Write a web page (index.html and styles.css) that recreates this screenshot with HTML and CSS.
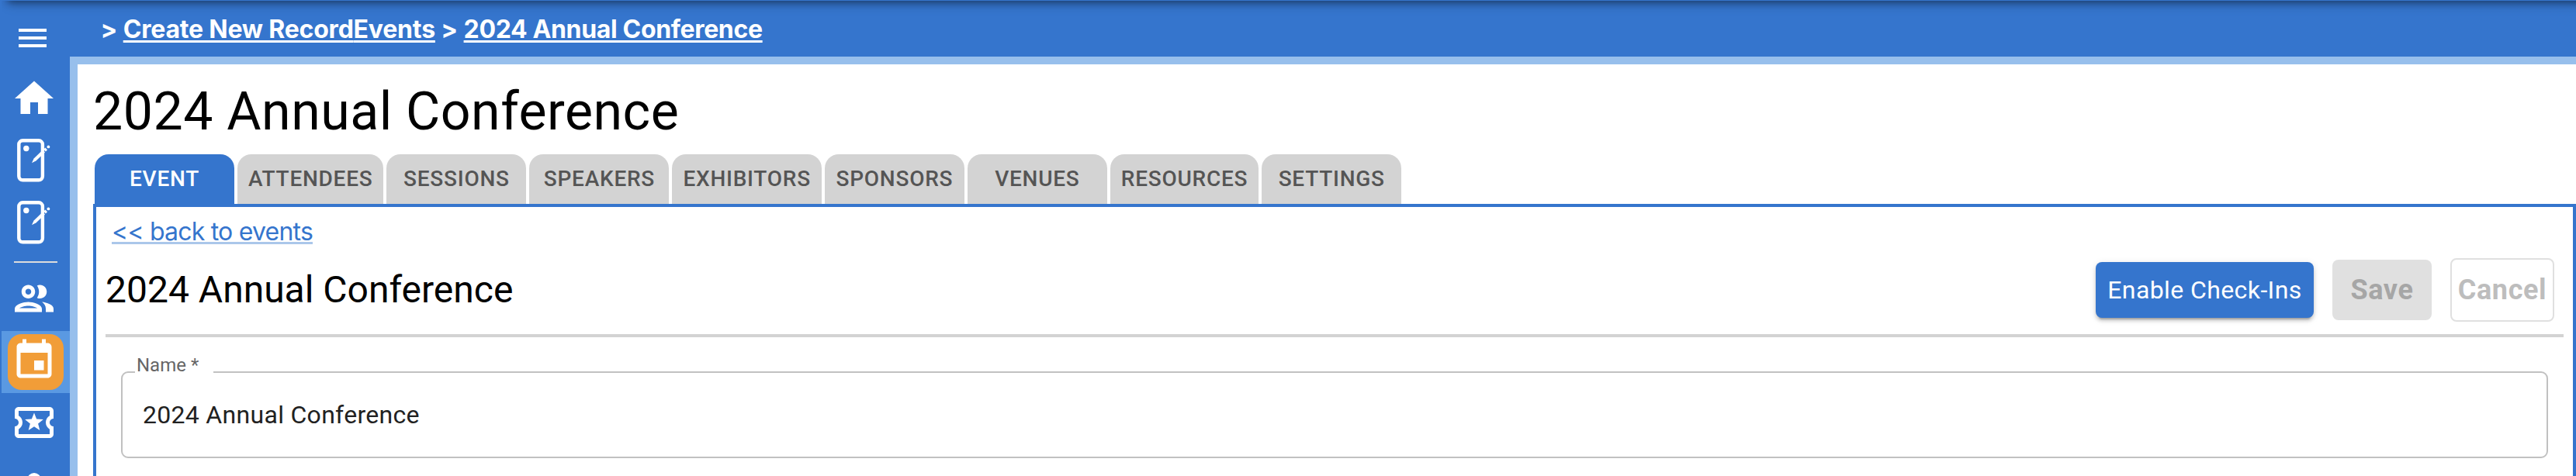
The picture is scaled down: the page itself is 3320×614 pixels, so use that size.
FILE: index.html
```
<!DOCTYPE html>
<html lang="en">
<head>
    <meta charset="UTF-8">
    <meta name="viewport" content="width=device-width, initial-scale=1.0">
    <title>2024 Annual Conference</title>
    <link rel="stylesheet" href="styles.css">
</head>
<body>
    <div class="app">
        <div class="top-shadow"></div>
        <nav class="sidebar">
            <button class="menu-button">
                <svg viewBox="0 0 24 24"><path d="M3 18h18v-2H3v2zm0-5h18v-2H3v2zm0-7v2h18V6H3z"/></svg>
            </button>
            <a class="nav-item">
                <svg viewBox="0 0 24 24"><path d="M10 20v-6h4v6h5v-8h3L12 3 2 12h3v8z"/></svg>
            </a>
            <a class="nav-item">
                <svg viewBox="0 0 60 60">
                    <rect class="outline" x="10.3" y="4.3" width="30.6" height="51" rx="5"/>
                    <circle cx="19.8" cy="14.5" r="3.7"/>
                    <path d="M27 33.2l2.6-5.6L41 16.6l3 3L32.6 30.2z"/>
                    <path d="M42.2 15.6l2.2-2.1 2.6 2.7-2.1 2.2z"/>
                    <circle cx="48.4" cy="12.4" r="1.9"/>
                </svg>
            </a>
            <a class="nav-item">
                <svg viewBox="0 0 60 60">
                    <rect class="outline" x="10.3" y="4.3" width="30.6" height="51" rx="5"/>
                    <circle cx="19.8" cy="14.5" r="3.7"/>
                    <path d="M27 33.2l2.6-5.6L41 16.6l3 3L32.6 30.2z"/>
                    <path d="M42.2 15.6l2.2-2.1 2.6 2.7-2.1 2.2z"/>
                    <circle cx="48.4" cy="12.4" r="1.9"/>
                </svg>
            </a>
            <div class="divider"></div>
            <a class="nav-item">
                <svg viewBox="0 0 24 24"><path d="M9 13.75c-2.34 0-7 1.17-7 3.5V19h14v-1.75c0-2.33-4.66-3.5-7-3.5zM4.34 17c.84-.58 2.87-1.25 4.66-1.25s3.82.67 4.66 1.25H4.34zM9 12c1.93 0 3.5-1.57 3.5-3.5S10.93 5 9 5 5.5 6.57 5.5 8.5 7.07 12 9 12zm0-5c.83 0 1.5.67 1.5 1.5S9.83 10 9 10s-1.5-.67-1.5-1.5S8.17 7 9 7zm7.04 6.81c1.16.84 1.96 1.96 1.96 3.44V19h4v-1.75c0-2.02-3.5-3.17-5.96-3.44zM15 12c1.93 0 3.5-1.57 3.5-3.5S16.93 5 15 5c-.54 0-1.04.13-1.5.35.63.89 1 1.98 1 3.15s-.37 2.26-1 3.15c.46.22.96.35 1.5.35z"/></svg>
            </a>
            <a class="nav-item active">
                <span class="nav-badge">
                    <svg viewBox="0 0 24 24"><path d="M19 3h-1V1h-2v2H8V1H6v2H5c-1.11 0-1.99.9-1.99 2L3 19c0 1.1.89 2 2 2h14c1.1 0 2-.9 2-2V5c0-1.1-.9-2-2-2zm0 16H5V8h14v11zm-7-7h5v5h-5z"/></svg>
                </span>
            </a>
            <a class="nav-item">
                <svg viewBox="0 0 24 24"><path d="M22 10V6c0-1.11-.9-2-2-2H4c-1.1 0-1.99.89-1.99 2v4c1.1 0 1.99.9 1.99 2s-.89 2-2 2v4c0 1.1.9 2 2 2h16c1.1 0 2-.9 2-2v-4c-1.1 0-2-.9-2-2s.9-2 2-2zm-2-1.46c-1.19.69-2 1.99-2 3.46s.81 2.77 2 3.46V18H4v-2.54c1.19-.69 2-1.99 2-3.46 0-1.48-.8-2.77-1.99-3.46L4 6h16v2.54zM9.07 16L12 14.12 14.93 16l-.89-3.36 2.69-2.2-3.47-.21L12 7l-1.27 3.22-3.47.21 2.69 2.2z"/></svg>
            </a>
            <a class="nav-item">
                <svg viewBox="0 0 24 24"><circle cx="12" cy="9.5" r="3.5"/></svg>
            </a>
        </nav>

        <div class="main">
            <div class="breadcrumbs">
                <span>&gt;</span>
                <span class="crumb crumb-first"><a>Create New Record</a><a>Events</a></span>
                <span>&gt;</span>
                <a class="crumb crumb-last">2024 Annual Conference</a>
            </div>

            <div class="content">
                <h1>2024 Annual Conference</h1>

                <div class="tabs">
                    <button class="tab selected">EVENT</button>
                    <button class="tab">ATTENDEES</button>
                    <button class="tab">SESSIONS</button>
                    <button class="tab">SPEAKERS</button>
                    <button class="tab">EXHIBITORS</button>
                    <button class="tab">SPONSORS</button>
                    <button class="tab">VENUES</button>
                    <button class="tab">RESOURCES</button>
                    <button class="tab">SETTINGS</button>
                </div>

                <div class="panel">
                    <div class="back"><a>&lt;&lt; back to events</a></div>
                    <div class="panel-header">
                        <h2>2024 Annual Conference</h2>
                        <div class="actions">
                            <button class="button-primary">Enable Check-Ins</button>
                            <button class="button-save" disabled>Save</button>
                            <button class="button-cancel" disabled>Cancel</button>
                        </div>
                    </div>
                    <div class="field">
                        <label for="name">Name *</label>
                        <input type="text" id="name" value="2024 Annual Conference">
                    </div>
                </div>
            </div>
        </div>
    </div>
</body>
</html>
```
FILE: styles.css
```
* {
    margin: 0;
    padding: 0;
    box-sizing: border-box;
}
body {
    background: #3575cd;
    font-family: Roboto, sans-serif;
    overflow: hidden;
}
button {
    border: none;
    background: none;
    font-family: inherit;
}
.app {
    display: flex;
    height: 614px;
    overflow: hidden;
    position: relative;
}
.top-shadow {
    position: absolute;
    top: 1px;
    left: 2px;
    right: 0;
    height: 20px;
    overflow: hidden;
    pointer-events: none;
}
.top-shadow::before {
    content: "";
    position: absolute;
    top: -20px;
    left: 8px;
    right: -20px;
    height: 20px;
    box-shadow: 0 2px 10px rgba(0, 0, 0, 0.4), 0 4px 16px rgba(0, 0, 0, 0.2);
}

/* Sidebar */
.sidebar {
    width: 90px;
    flex: none;
    padding-left: 2px;
    display: flex;
    flex-direction: column;
}
.sidebar svg {
    display: block;
    width: 60px;
    height: 60px;
    fill: white;
}
.sidebar .outline {
    fill: none;
    stroke: white;
    stroke-width: 4.4;
}
.menu-button {
    display: flex;
    align-items: flex-start;
    height: 89px;
    flex: none;
    padding: 25px 0 0 16px;
}
.sidebar .menu-button svg {
    width: 48px;
    height: 48px;
}
.nav-item {
    display: block;
    height: 80px;
    flex: none;
    padding: 8px 12px;
}
.nav-item.active {
    background: #5a99e2;
    padding: 4px 8px;
}
.nav-badge {
    display: block;
    width: 72px;
    height: 72px;
    padding: 4px;
    border-radius: 18px;
    background: #f19d38;
}
.divider {
    height: 2px;
    flex: none;
    margin: 8px 16px;
    background: #dcdcdc;
}

/* Breadcrumbs */
.main {
    flex: 1;
    display: flex;
    flex-direction: column;
}
.breadcrumbs {
    height: 73px;
    flex: none;
    display: flex;
    gap: 7.5px;
    padding: 2px 0 0 39.5px;
    font: bold 32px/72px Inter, sans-serif;
    color: white;
}
.crumb {
    text-decoration: underline;
    text-decoration-thickness: 3px;
    text-underline-offset: 3px;
    text-decoration-skip-ink: none;
}
.crumb-first {
    letter-spacing: -0.2px;
}
.crumb-last {
    letter-spacing: -0.34px;
}

.content {
    flex: 1;
    display: flex;
    flex-direction: column;
    border: solid #97bfec;
    border-width: 10px 0 0 10px;
    background: white;
    padding: 6px 0 0 20px;
}
h1 {
    font-size: 68px;
    font-weight: 400;
    line-height: 110px;
    letter-spacing: 0.5px;
}

/* Tabs */
.tabs {
    display: flex;
    gap: 4px;
    padding-left: 2px;
}
.tab {
    min-width: 180px;
    height: 64px;
    padding: 0 14px 1px;
    border-radius: 18px 18px 0 0;
    background: #d3d3d3;
    color: #555;
    font-size: 28px;
    font-weight: 500;
    line-height: 63px;
    letter-spacing: 0.74px;
}
.tab.selected {
    background: #3575cd;
    color: white;
}

/* Panel */
.panel {
    flex: 1;
    border: 4px solid #3575cd;
    border-bottom: none;
    padding: 0 12px;
}
.back {
    padding: 1px 0 3px 8px;
    font: 32px/62px Inter, sans-serif;
    letter-spacing: -0.79px;
    color: #3575cd;
}
.back a {
    text-decoration: underline 3px #abc7ea;
    text-underline-offset: 2px;
    text-decoration-skip-ink: none;
}
.panel-header {
    display: flex;
    justify-content: space-between;
    align-items: center;
    padding: 0 12px 16px 0;
    border-bottom: 4px solid #d3d3d3;
}
h2 {
    font-size: 48px;
    font-weight: 400;
    line-height: 82px;
}
.actions {
    display: flex;
    align-items: center;
    gap: 24px;
}
.button-primary {
    width: 281px;
    height: 72px;
    border-radius: 8px;
    background: #3575cd;
    color: white;
    font-size: 32px;
    letter-spacing: 0.4px;
    box-shadow: 0 6px 2px -4px rgba(0, 0, 0, 0.2), 0 4px 4px rgba(0, 0, 0, 0.14), 0 2px 10px rgba(0, 0, 0, 0.12);
}
.button-save {
    width: 128px;
    height: 78px;
    border-radius: 8px;
    background: #e0e0e0;
    color: #a6a6a6;
    font-size: 36px;
    font-weight: bold;
    letter-spacing: 0.6px;
}
.button-cancel {
    width: 134px;
    height: 82px;
    border: 2px solid #e0e0e0;
    border-radius: 8px;
    color: #bdbdbd;
    font-size: 36px;
    font-weight: bold;
    letter-spacing: 0.6px;
}

/* Outlined text field */
.field {
    position: relative;
    height: 112px;
    margin: 44px 20px 0;
    border: 2px solid #c1c1c1;
    border-radius: 9px;
}
.field label {
    position: absolute;
    top: -22px;
    left: 16px;
    width: 101px;
    padding-left: 2px;
    background: white;
    color: #666;
    font-size: 24px;
    line-height: 24px;
}
.field input {
    display: block;
    width: 100%;
    height: 108px;
    padding: 0 26px;
    border: none;
    outline: none;
    background: none;
    color: #212121;
    font: 32px Roboto, sans-serif;
    letter-spacing: 0.3px;
}
```
